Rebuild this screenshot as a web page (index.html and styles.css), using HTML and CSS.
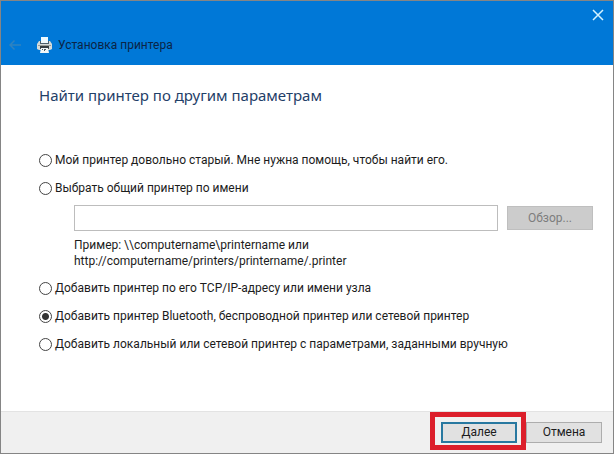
FILE: index.html
```html
<!DOCTYPE html>
<html lang="ru">
<head>
  <meta charset="UTF-8" />
  <meta name="viewport" content="width=device-width, initial-scale=1.0" />
  <title>Установка принтера</title>
  <link rel="stylesheet" href="styles.css">
</head>
<body>
  <form class="window">
    <header class="titlebar">
      <div class="caption">
        <button type="button" class="close" aria-label="Закрыть">
          <svg width="12" height="12" viewBox="0 0 12 12"><path d="M1 1l10 10M11 1L1 11" stroke="#d5f3ff" stroke-width="1.5" fill="none"/></svg>
        </button>
      </div>
      <div class="nav">
        <button type="button" class="back" aria-label="Назад" disabled>
          <svg width="12" height="12" viewBox="0 0 12 12"><path d="M12 6H1M5.500 1.500L1 6l4.500 4.500" stroke="#2f83c0" stroke-width="1.500" fill="none"/></svg>
        </button>
        <svg class="printer" width="16" height="16" viewBox="0 0 16 16">
          <path d="M4 0h7v6H4z" fill="#eefaff"/>
          <path d="M2 4h2v2h7V4h2l2 3v5l-2 1H2l-2-1V7z" fill="#d3dad9"/>
          <path d="M3 4h1v2h7V4h1v3H3z" fill="#4d606c"/>
          <path d="M1 8h13v1H1z" fill="#989c97"/>
          <path d="M3 9h9v3H3z" fill="#343d42"/>
          <path d="M4 11h7l1 5H3z" fill="#f1f7f8"/>
          <path d="M5 12h1v1H5zM7 12h2v1H7zM7 13h1v1H7z" fill="#4d5a60"/>
        </svg>
        <span class="app-title">Установка принтера</span>
      </div>
    </header>

    <main class="content">
      <h1>Найти принтер по другим параметрам</h1>

      <label class="option"><input type="radio" name="method">Мой принтер довольно старый. Мне нужна помощь, чтобы найти его.</label>
      <label class="option"><input type="radio" name="method">Выбрать общий принтер по имени</label>

      <div class="shared">
        <div class="shared-row">
          <input type="text" class="path" aria-label="Имя общего принтера">
          <button type="button" class="browse" disabled>Обзор...</button>
        </div>
        <p>Пример: \\computername\printername или<br>http://computername/printers/printername/.printer</p>
      </div>

      <label class="option"><input type="radio" name="method">Добавить принтер по его TCP/IP-адресу или имени узла</label>
      <label class="option"><input type="radio" name="method" checked>Добавить принтер Bluetooth, беспроводной принтер или сетевой принтер</label>
      <label class="option"><input type="radio" name="method">Добавить локальный или сетевой принтер с параметрами, заданными вручную</label>
    </main>

    <footer class="footer">
      <div class="marked">
        <button type="button" class="btn btn-default">Далее</button>
      </div>
      <button type="button" class="btn">Отмена</button>
    </footer>
  </form>
</body>
</html>
```

FILE: styles.css
```css
* {
  box-sizing: border-box;
}
body {
  margin: 0;
  font-family: Roboto, "Noto Sans", sans-serif;
  font-size: 12px;
  color: #1c1c1c;
}
button,
input {
  font: inherit;
  color: inherit;
  margin: 0;
}
.window {
  display: flex;
  flex-direction: column;
  min-height: 100vh;
  background: #fff;
  border: 1px solid #858585;
}

/* title bar */
.titlebar {
  background: #0078d7;
  padding-bottom: 7px;
}
.caption {
  display: flex;
  justify-content: flex-end;
  padding: 8px 9px 11px 0;
}
.close,
.back {
  display: flex;
  padding: 0;
  border: 0;
  background: none;
}
.nav {
  display: flex;
  align-items: center;
  height: 26px;
  padding-left: 8px;
}
.printer {
  margin-left: 16px;
}
.app-title {
  margin-left: 5px;
  color: #0b2445;
}

/* page */
.content {
  flex: 1;
  padding: 18px 20px 0 38px;
}
h1 {
  margin: 0 0 38px;
  font-family: "Noto Sans", sans-serif;
  font-size: 15px;
  font-weight: normal;
  line-height: 25px;
  color: #1f4068;
}
.option {
  display: flex;
  align-items: center;
  gap: 3px;
  height: 28px;
}
.option input {
  appearance: none;
  width: 13px;
  height: 13px;
  border: 1px solid #444;
  border-radius: 50%;
  background: #fff;
}
.option input:checked {
  background: radial-gradient(circle, #333 3px, #fff 4px);
}
.shared {
  padding: 3px 0 5px 35px;
}
.shared-row {
  display: flex;
  align-items: center;
  gap: 9px;
}
.path {
  flex: 1;
  min-width: 0;
  height: 26px;
  border: 1px solid #bdbdbd;
  background: #fff;
}
.browse {
  width: 86px;
  height: 24px;
  padding: 0;
  border: 1px solid #bfbfbf;
  background: #ccc;
  color: #7d7d7d;
}
.shared p {
  margin: 6px 0 0;
  line-height: 16px;
}

/* buttons */
.footer {
  display: flex;
  justify-content: flex-end;
  gap: 9px;
  padding: 10px 11px;
  background: #f0f0f0;
  border-top: 1px solid #e3e3e3;
}
.btn {
  display: block;
  width: 76px;
  height: 21px;
  padding: 0;
  line-height: 17px;
  border: 1px solid #adadad;
  background: #e1e1e1;
}
.btn-default {
  border: 2px solid #2878a0;
}
.marked {
  position: relative;
}
.marked::after {
  content: "";
  position: absolute;
  inset: -10px -9px -7px -11px;
  border: 5px solid #dc1f2b;
  pointer-events: none;
}
```
